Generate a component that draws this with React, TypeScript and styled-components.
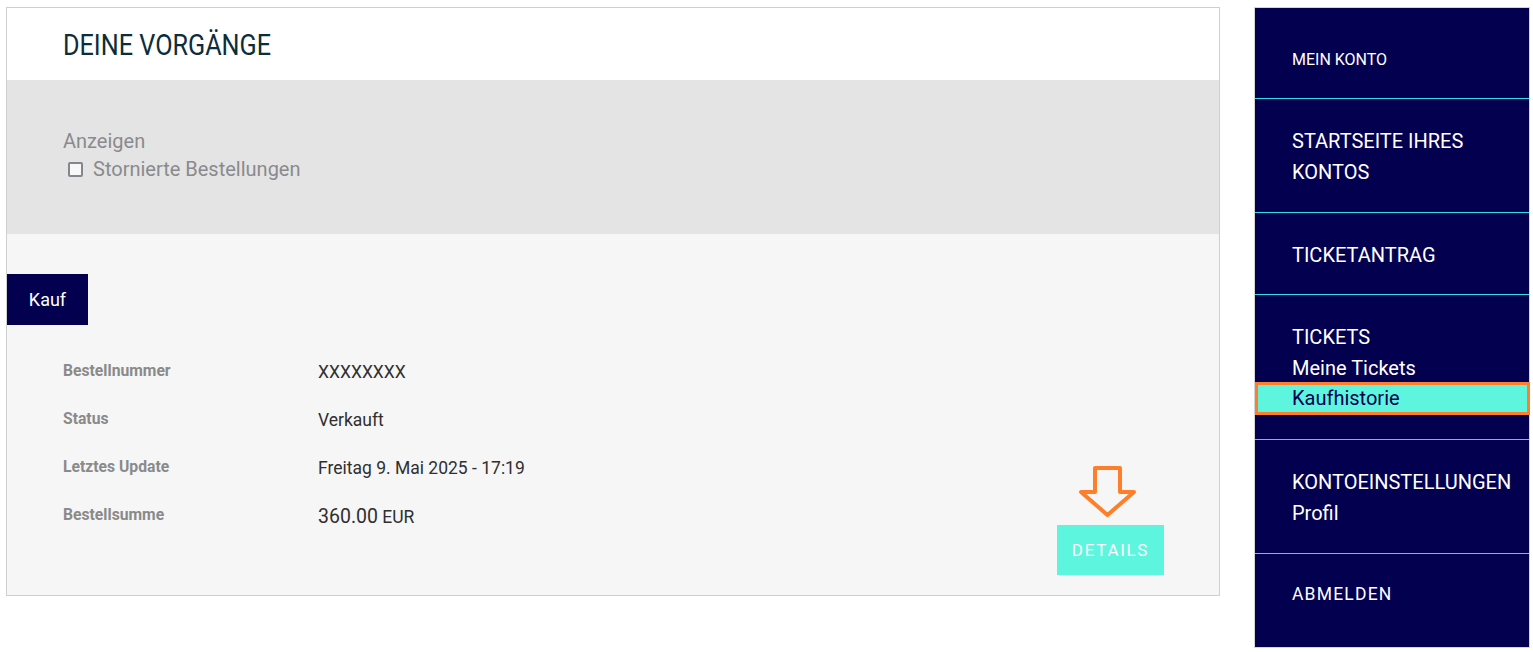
import React from "react";
import styled, { createGlobalStyle } from "styled-components";

const NAVY = "#03004f";
const CYAN = "#5ef5de";
const ORANGE = "#fd7f2c";

const GlobalStyle = createGlobalStyle`
  body {
    margin: 0;
    background: #fff;
    font-family: Roboto, "Liberation Sans", sans-serif;
  }
`;

const rows = [
  { label: "Bestellnummer", value: "XXXXXXXX" },
  { label: "Status", value: "Verkauft" },
  { label: "Letztes Update", value: "Freitag 9. Mai 2025 - 17:19" },
  { label: "Bestellsumme", value: "360.00", unit: "EUR" },
];

export default function App() {
  return (
    <>
      <GlobalStyle />
      <Page>
        <Panel>
          <Header>
            <Title>DEINE VORGÄNGE</Title>
          </Header>

          <FilterBar>
            <FilterLabel>Anzeigen</FilterLabel>
            <CheckRow>
              <CheckBox />
              Stornierte Bestellungen
            </CheckRow>
          </FilterBar>

          <Orders>
            <Tab>Kauf</Tab>
            <OrderBody>
              <DetailList>
                {rows.map((r) => (
                  <DetailRow key={r.label}>
                    <DetailLabel>{r.label}</DetailLabel>
                    <DetailValue $large={!!r.unit}>
                      {r.value}
                      {r.unit && <Unit> {r.unit}</Unit>}
                    </DetailValue>
                  </DetailRow>
                ))}
              </DetailList>

              <ButtonWrap>
                <Arrow width="60" height="54" viewBox="0 0 60 54">
                  <path
                    d="M16 3 H41 V27 H55 L28.5 50 L2 27 H16 Z"
                    fill="none"
                    stroke={ORANGE}
                    strokeWidth="4"
                    strokeLinejoin="round"
                  />
                </Arrow>
                <DetailsButton>DETAILS</DetailsButton>
              </ButtonWrap>
            </OrderBody>
          </Orders>
        </Panel>

        <Sidebar>
          <NavSection $top={36} $bottom={23}>
            <NavHeading $small>MEIN KONTO</NavHeading>
          </NavSection>
          <NavSection $bottom={24}>
            <NavHeading>STARTSEITE IHRES KONTOS</NavHeading>
          </NavSection>
          <NavSection $bottom={23}>
            <NavHeading>TICKETANTRAG</NavHeading>
          </NavSection>
          <NavSection $bottom={24}>
            <NavHeading>TICKETS</NavHeading>
            <NavLink>Meine Tickets</NavLink>
            <NavLink $active>Kaufhistorie</NavLink>
          </NavSection>
          <NavSection $bottom={24}>
            <NavHeading>KONTOEINSTELLUNGEN</NavHeading>
            <NavLink>Profil</NavLink>
          </NavSection>
          <NavSection $top={25} $last>
            <NavHeading $spaced>ABMELDEN</NavHeading>
          </NavSection>
        </Sidebar>
      </Page>
    </>
  );
}

const Page = styled.div`
  display: flex;
  align-items: flex-start;
  gap: 34px;
  padding: 7px 0 0 6px;
`;

const Panel = styled.div`
  width: 1212px;
  border: 1px solid #cfcfcf;
  background: #f6f6f6;
`;

const Header = styled.div`
  height: 72px;
  background: #fff;
  padding-left: 56px;
  display: flex;
  align-items: center;
`;

const Title = styled.h1`
  margin: 0;
  display: inline-block;
  font-family: Roboto, "Liberation Sans", sans-serif;
  font-weight: 400;
  font-size: 30px;
  color: #0c2d3a;
  transform: scaleX(0.84);
  transform-origin: left center;
  white-space: nowrap;
`;

const FilterBar = styled.div`
  height: 154px;
  background: #e4e4e4;
  padding: 49px 0 0 56px;
  box-sizing: border-box;
  color: #8a8a8e;
  font-size: 20px;
`;

const FilterLabel = styled.div`
  line-height: 24px;
`;

const CheckRow = styled.div`
  display: flex;
  align-items: center;
  gap: 10px;
  margin-top: 4px;
  padding-left: 5px;
  line-height: 24px;
`;

const CheckBox = styled.span`
  width: 11px;
  height: 11px;
  border: 2px solid #85858e;
  border-radius: 2px;
  background: #f8f8f8;
`;

const Orders = styled.div`
  padding: 40px 0 20px 0;
`;

const Tab = styled.div`
  width: 81px;
  height: 51px;
  background: ${NAVY};
  color: #fff;
  font-size: 18px;
  display: flex;
  align-items: center;
  justify-content: center;
`;

const OrderBody = styled.div`
  display: flex;
  justify-content: space-between;
  align-items: flex-end;
  padding: 28px 55px 0 56px;
`;

const DetailList = styled.div`
  display: flex;
  flex-direction: column;
  gap: 10px;
  padding-bottom: 40px;
`;

const DetailRow = styled.div`
  display: grid;
  grid-template-columns: 255px 1fr;
  align-items: center;
  height: 38px;
`;

const DetailLabel = styled.div`
  font-size: 15.7px;
  font-weight: 700;
  color: #8a8a8a;
  margin-top: -4px;
`;

const DetailValue = styled.div<{ $large?: boolean }>`
  font-size: ${(p) => (p.$large ? "19.5px" : "17.5px")};
  color: #2f2f2f;
`;

const Unit = styled.span`
  font-size: 17.5px;
`;

const ButtonWrap = styled.div`
  position: relative;
`;

const Arrow = styled.svg`
  position: absolute;
  left: 22px;
  top: -60px;
`;

const DetailsButton = styled.div`
  width: 107px;
  height: 50px;
  background: ${CYAN};
  color: #fff;
  font-size: 17px;
  letter-spacing: 1.7px;
  display: flex;
  align-items: center;
  justify-content: center;
`;

const Sidebar = styled.nav`
  width: 274px;
  height: 639px;
  border: 1px solid #d4d4d4;
  background: ${NAVY};
  color: #fff;
  display: flex;
  flex-direction: column;
`;

const NavSection = styled.div<{ $top?: number; $bottom?: number; $last?: boolean }>`
  padding: ${(p) => p.$top ?? 27}px 0 ${(p) => p.$bottom ?? 24}px 0;
  border-bottom: ${(p) => (p.$last ? "none" : "1px solid #2fdde6")};
  display: flex;
  flex-direction: column;
`;

const NavHeading = styled.div<{ $small?: boolean; $spaced?: boolean }>`
  padding-left: 37px;
  padding-right: 16px;
  font-size: ${(p) => (p.$small ? "16px" : p.$spaced ? "17.5px" : "20px")};
  font-weight: 400;
  line-height: 31px;
  letter-spacing: ${(p) => (p.$spaced ? "1.2px" : "0")};
`;

const NavLink = styled.div<{ $active?: boolean }>`
  padding-left: ${(p) => (p.$active ? "34px" : "37px")};
  font-size: 20px;
  line-height: ${(p) => (p.$active ? "27px" : "31px")};
  background: ${(p) => (p.$active ? CYAN : "transparent")};
  color: ${(p) => (p.$active ? NAVY : "#fff")};
  border: ${(p) => (p.$active ? `3px solid ${ORANGE}` : "none")};
  margin-top: ${(p) => (p.$active ? "-2px" : "0")};
  margin-right: ${(p) => (p.$active ? "-1px" : "0")};
`;
